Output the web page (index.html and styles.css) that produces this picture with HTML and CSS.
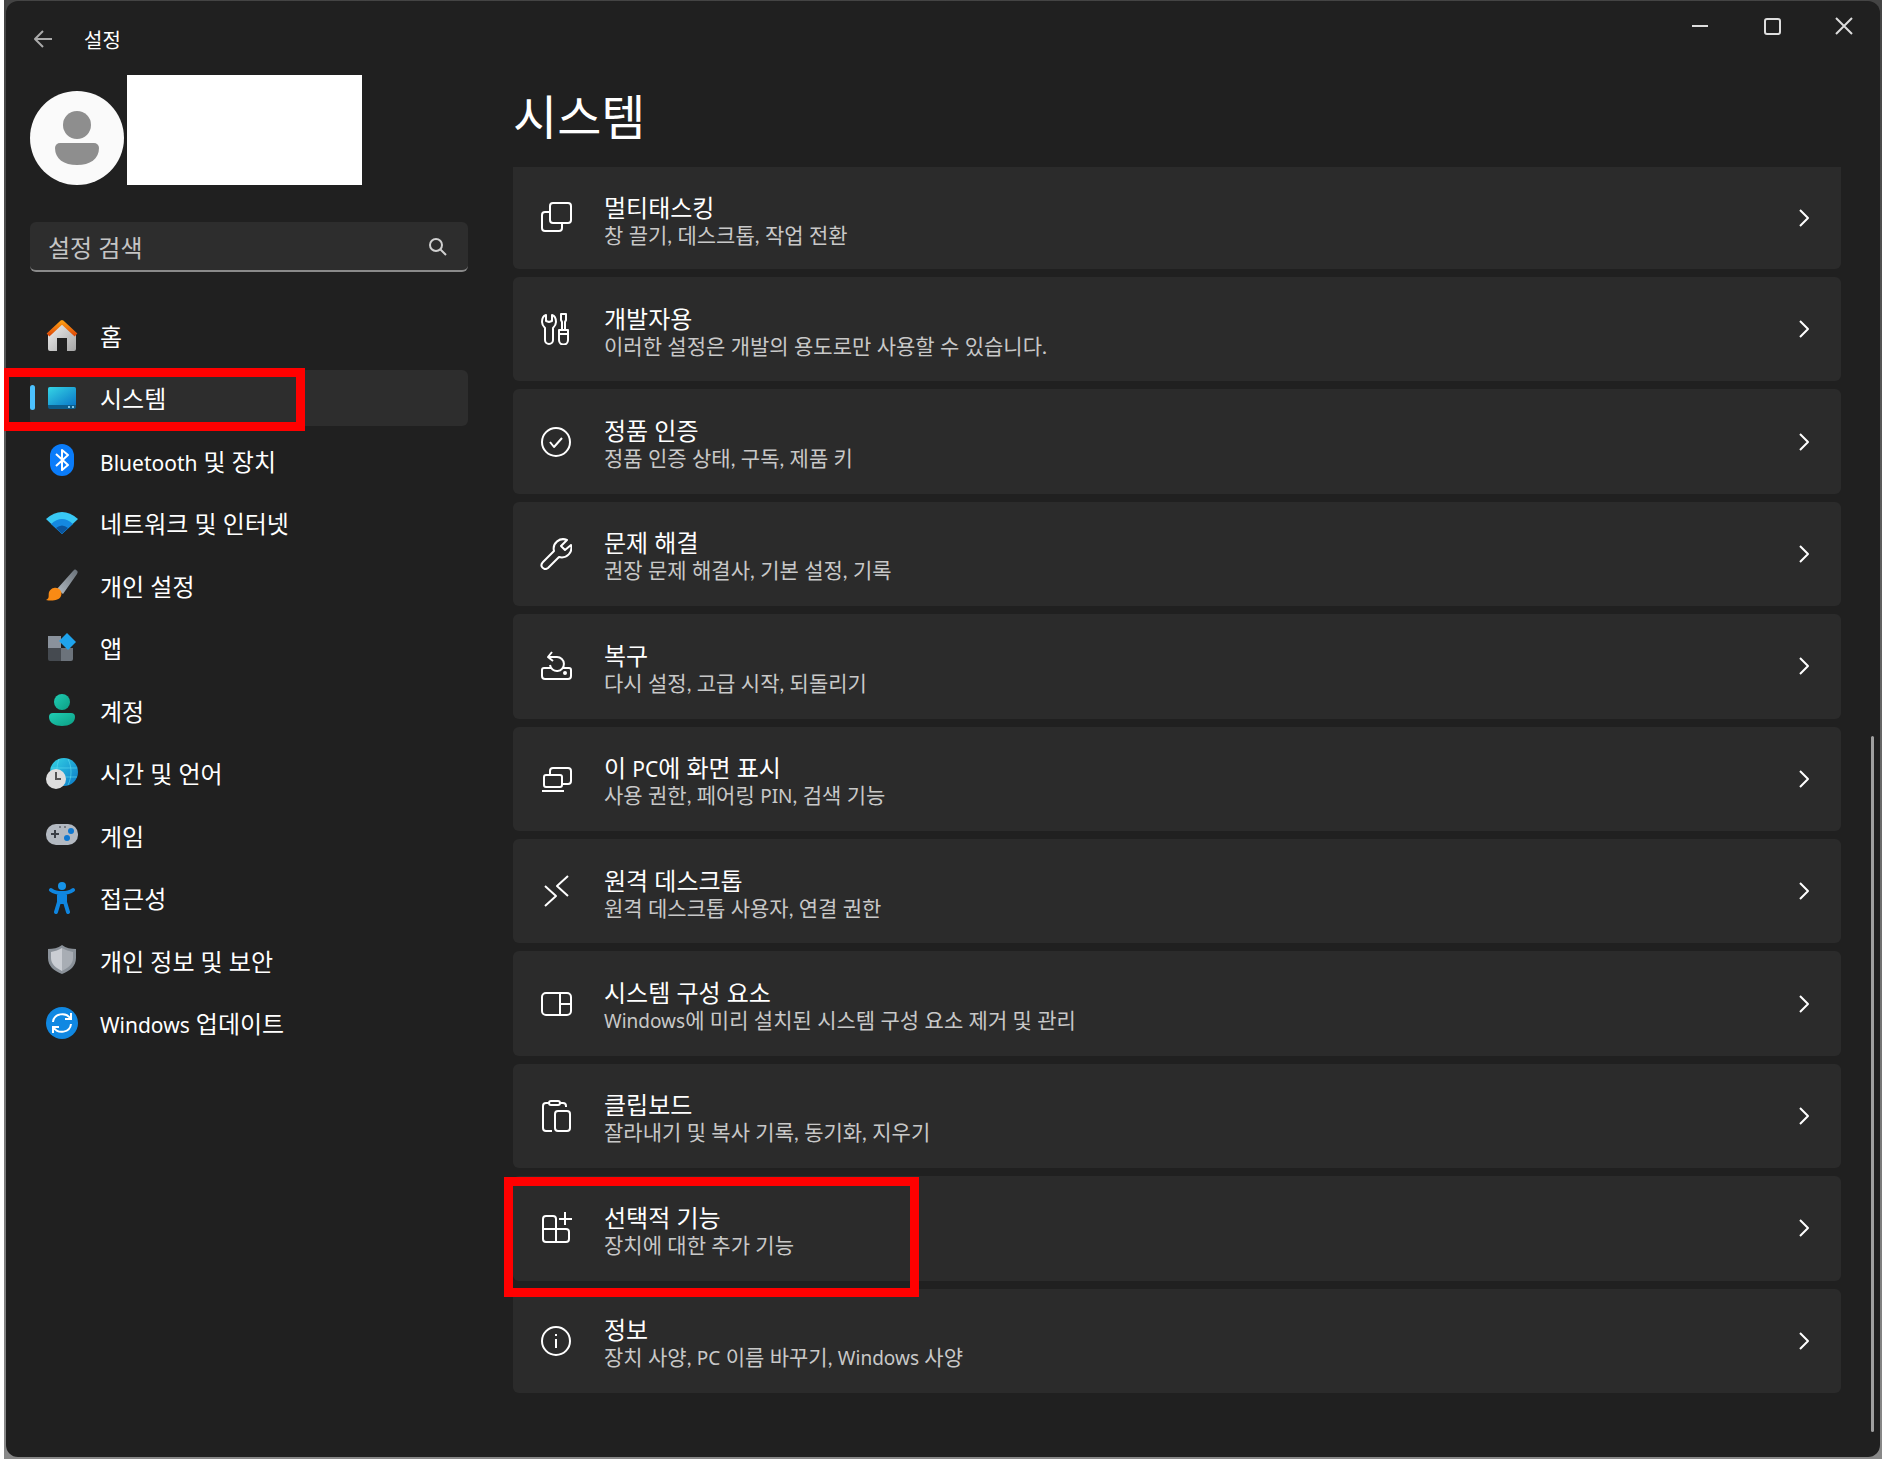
FILE: index.html
```html
<!DOCTYPE html>
<html lang="ko">
<head>
  <meta charset="UTF-8" />
  <meta name="viewport" content="width=device-width, initial-scale=1" />
  <title>설정</title>
  <link rel="stylesheet" href="styles.css">
</head>
<body>
  <div class="window">
    <header class="titlebar">
      <button class="back" aria-label="뒤로">
        <svg width="20" height="20" viewBox="0 0 20 20"><path d="M19 10H2M10 2l-8 8 8 8" /></svg>
      </button>
      <span class="app-name">설정</span>
      <div class="window-controls">
        <button aria-label="최소화"><svg width="18" height="18" viewBox="0 0 18 18"><path d="M1 9h16" /></svg></button>
        <button aria-label="최대화"><svg width="18" height="18" viewBox="0 0 18 18"><rect x="2" y="2" width="15" height="15" rx="2" /></svg></button>
        <button aria-label="닫기"><svg width="18" height="18" viewBox="0 0 18 18"><path d="M1 1l16 16M17 1 1 17" /></svg></button>
      </div>
    </header>

    <div class="content">
      <aside class="sidebar">
        <div class="account">
          <svg class="avatar" viewBox="0 0 94 94">
            <circle cx="47" cy="47" r="47" fill="#fafafa" />
            <circle cx="47" cy="34" r="14" fill="#8e8e8e" />
            <path d="M30 52h34a5 5 0 0 1 5 5c0 11-9 17-22 17s-22-6-22-17a5 5 0 0 1 5-5z" fill="#8e8e8e" />
          </svg>
          <div class="account-info"></div>
        </div>

        <form class="search">
          <input type="text" placeholder="설정 검색" aria-label="설정 검색">
          <button type="button" aria-label="검색">
            <svg width="20" height="20" viewBox="0 0 20 20"><circle cx="8" cy="8" r="6" /><path d="M12 12l6 6" /></svg>
          </button>
        </form>

        <nav class="nav">
          <a href="#home">
            <svg viewBox="0 0 32 32">
              <defs>
                <linearGradient id="roof" x1="0" y1="0" x2="0" y2="1"><stop offset="0" stop-color="#fb9a12" /><stop offset="1" stop-color="#de4a08" /></linearGradient>
                <linearGradient id="wall" x1="0" y1="0" x2="1" y2="1"><stop offset="0" stop-color="#f2f2f2" /><stop offset="1" stop-color="#a5a5a5" /></linearGradient>
              </defs>
              <path d="M16 4 2 16v14a2 2 0 0 0 2 2h7V19h10v13h7a2 2 0 0 0 2-2V16z" fill="url(#wall)" />
              <path d="M2 16 16 3l14 13" fill="none" stroke="url(#roof)" stroke-width="4" stroke-linejoin="round" />
            </svg>
            홈
          </a>
          <a href="#system" class="selected">
            <svg viewBox="0 0 32 32">
              <defs><linearGradient id="screen" x1="0" y1="0" x2="1" y2="1"><stop offset="0" stop-color="#35d5e5" /><stop offset="1" stop-color="#0a78c8" /></linearGradient></defs>
              <rect x="2" y="5" width="28" height="22" rx="2" fill="#0c5d8c" />
              <path d="M4 5h24a2 2 0 0 1 2 2v16H2V7a2 2 0 0 1 2-2z" fill="url(#screen)" />
              <path d="M22 25h2M26 25h2" stroke="#7fc4e6" stroke-width="2" />
            </svg>
            시스템
          </a>
          <a href="#bluetooth">
            <svg viewBox="0 0 32 32">
              <rect x="4" y="0" width="24" height="32" rx="12" fill="#0a7cfa" />
              <path d="M10 10l12 11-6 5V6l6 5-12 11" fill="none" stroke="#fff" stroke-width="2" stroke-linejoin="round" />
            </svg>
            <span><span class="latin">Bluetooth</span> 및 장치</span>
          </a>
          <a href="#network">
            <svg viewBox="0 0 32 32">
              <path d="M0 12Q16-2 32 12L16 27z" fill="#39c9f5" />
              <path d="M5 17q11-10 22 0L16 27z" fill="#1488e0" />
              <path d="M10 21q6-5 12 0l-6 6z" fill="#0a559e" />
            </svg>
            네트워크 및 인터넷
          </a>
          <a href="#personalization">
            <svg viewBox="0 0 32 32">
              <defs><linearGradient id="handle" x1="1" y1="0" x2="0" y2="1"><stop offset="0" stop-color="#687078" /><stop offset="1" stop-color="#b2bac2" /></linearGradient></defs>
              <path d="M30 1c2 1 2 2 1 4L17 25l-6-5L27 2c1-1 2-2 3-1z" fill="url(#handle)" />
              <path d="M8 19c5-1 9 4 7 8-2 5-10 5-15 4 4-2 2-4 3-8 1-2 3-4 5-4z" fill="#f98a14" />
            </svg>
            개인 설정
          </a>
          <a href="#apps">
            <svg viewBox="0 0 32 32">
              <path d="M2 4h13v12H2z" fill="#8a929c" />
              <path d="M2 16h13v13H4a2 2 0 0 1-2-2z" fill="#454a50" />
              <path d="M15 16h12v11a2 2 0 0 1-2 2H15z" fill="#6c737b" />
              <path d="M21 1l9 9-8 8-9-9z" fill="#1ea3ec" />
            </svg>
            앱
          </a>
          <a href="#accounts">
            <svg viewBox="0 0 32 32">
              <defs><linearGradient id="person" x1="0" y1="0" x2="1" y2="1"><stop offset="0" stop-color="#20cdb4" /><stop offset="1" stop-color="#0c9e83" /></linearGradient></defs>
              <circle cx="16" cy="8" r="8" fill="url(#person)" />
              <path d="M7 19h18a4 4 0 0 1 4 4c0 6-6 9-13 9S3 29 3 23a4 4 0 0 1 4-4z" fill="url(#person)" />
            </svg>
            계정
          </a>
          <a href="#time">
            <svg viewBox="0 0 32 32">
              <circle cx="18" cy="15" r="14" fill="url(#screen)" />
              <path d="M5 11h26M5 20h26M13 2c-3 8-3 18 2 26M22 2c4 8 4 18 0 26" fill="none" stroke="#5fdcf0" stroke-opacity=".6" />
              <circle cx="10" cy="22" r="10" fill="#dedede" />
              <path d="M10 15v7h5" fill="none" stroke="#555" stroke-width="2" />
            </svg>
            시간 및 언어
          </a>
          <a href="#gaming">
            <svg viewBox="0 0 32 32">
              <rect x="0" y="5" width="32" height="21" rx="10" fill="#b3b9c1" />
              <path d="M5 15h8M9 11v8" stroke="#3a3f46" stroke-width="2" />
              <path d="M13 8h2M18 8h2" stroke="#3a3f46" stroke-width="1" />
              <circle cx="25" cy="12" r="3" fill="#0f78d0" />
              <circle cx="21" cy="19" r="3" fill="#0f78d0" />
            </svg>
            게임
          </a>
          <a href="#accessibility">
            <svg viewBox="0 0 32 32">
              <circle cx="16" cy="4" r="4" fill="#1693e8" />
              <path d="M5 8c4 3 7 3 11 3s7 0 11-3M16 12v8M13 12v8l-3 10M19 12v8l3 10" fill="none" stroke="#0f86e0" stroke-width="4" stroke-linecap="round" stroke-linejoin="round" />
            </svg>
            접근성
          </a>
          <a href="#privacy">
            <svg viewBox="0 0 32 32">
              <path d="M16 1c4 3 9 4 14 4v9c0 8-6 13-14 16C8 27 2 22 2 14V5c5 0 10-1 14-4z" fill="#8a9199" />
              <path d="M16 4c3 2 7 3 11 4v6c0 6-5 10-11 13z" fill="#a8adb4" />
              <path d="M16 4C13 6 9 7 5 8v6c0 6 5 10 11 13z" fill="#cacdd3" />
            </svg>
            개인 정보 및 보안
          </a>
          <a href="#update">
            <svg viewBox="0 0 32 32">
              <circle cx="16" cy="16" r="16" fill="#1088e2" />
              <path d="M7 15c1-9 13-10 17-4M25 17c-1 9-13 10-17 4M25 6v6h-6M7 26v-6h6" fill="none" stroke="#fff" stroke-width="2" />
            </svg>
            <span><span class="latin">Windows</span> 업데이트</span>
          </a>
        </nav>
      </aside>

      <main class="main">
        <h1>시스템</h1>
        <div class="cards">
          <a class="card" href="#multitasking">
            <svg class="icon" viewBox="0 0 32 32"><rect x="10" y="1" width="21" height="20" rx="3" /><path d="M9 10H5a3 3 0 0 0-3 3v13a3 3 0 0 0 3 3h14a3 3 0 0 0 3-3v-4" /></svg>
            <div class="card-text"><h2>멀티태스킹</h2><p>창 끌기, 데스크톱, 작업 전환</p></div>
            <svg class="chevron" viewBox="0 0 20 20"><path d="M6 2l8 8-8 8" /></svg>
          </a>
          <a class="card" href="#developers">
            <svg class="icon" viewBox="0 0 32 32"><path d="M6 2c-3 1-4 4-4 7 0 2 1 4 3 6v12a4 4 0 0 0 8 0V15c2-2 3-4 3-6 0-3-1-6-4-7v6l-3 1-3-1z" /><path d="M21 1h5v6l-1 2v8h-3V9l-1-2zM19 17h9v10a4 4 0 0 1-9 0zM19 21h9" /></svg>
            <div class="card-text"><h2>개발자용</h2><p>이러한 설정은 개발의 용도로만 사용할 수 있습니다.</p></div>
            <svg class="chevron" viewBox="0 0 20 20"><path d="M6 2l8 8-8 8" /></svg>
          </a>
          <a class="card" href="#activation">
            <svg class="icon" viewBox="0 0 32 32"><circle cx="16" cy="16" r="14" /><path d="M10 16l4 5 8-9" /></svg>
            <div class="card-text"><h2>정품 인증</h2><p>정품 인증 상태, 구독, 제품 키</p></div>
            <svg class="chevron" viewBox="0 0 20 20"><path d="M6 2l8 8-8 8" /></svg>
          </a>
          <a class="card" href="#troubleshoot">
            <svg class="icon" viewBox="0 0 32 32"><path d="M27 2c-7-3-15 3-13 11L3 24c-4 4 1 9 5 6l11-11c8 2 14-5 12-12l-6 5-4-4z" /></svg>
            <div class="card-text"><h2>문제 해결</h2><p>권장 문제 해결사, 기본 설정, 기록</p></div>
            <svg class="chevron" viewBox="0 0 20 20"><path d="M6 2l8 8-8 8" /></svg>
          </a>
          <a class="card" href="#recovery">
            <svg class="icon" viewBox="0 0 32 32"><path d="M11 18H4a2 2 0 0 0-2 2v6a3 3 0 0 0 3 3h23a3 3 0 0 0 3-3v-6a2 2 0 0 0-2-2h-6M8 7h9a7 7 0 1 1-7 8M12 2 8 7l5 4" /><circle cx="25" cy="23" r="1" /></svg>
            <div class="card-text"><h2>복구</h2><p>다시 설정, 고급 시작, 되돌리기</p></div>
            <svg class="chevron" viewBox="0 0 20 20"><path d="M6 2l8 8-8 8" /></svg>
          </a>
          <a class="card" href="#projecting">
            <svg class="icon" viewBox="0 0 32 32"><path d="M10 11V8a3 3 0 0 1 3-3h15a3 3 0 0 1 3 3v10a3 3 0 0 1-3 3h-5M2 28h22" /><rect x="4" y="12" width="18" height="12" rx="2" /></svg>
            <div class="card-text"><h2>이 <span class="latin">PC</span>에 화면 표시</h2><p>사용 권한, 페어링 <span class="latin">PIN</span>, 검색 기능</p></div>
            <svg class="chevron" viewBox="0 0 20 20"><path d="M6 2l8 8-8 8" /></svg>
          </a>
          <a class="card" href="#remote">
            <svg class="icon" viewBox="0 0 32 32"><path d="M5 11l11 10L5 31M28 1 17 11l11 10" /></svg>
            <div class="card-text"><h2>원격 데스크톱</h2><p>원격 데스크톱 사용자, 연결 권한</p></div>
            <svg class="chevron" viewBox="0 0 20 20"><path d="M6 2l8 8-8 8" /></svg>
          </a>
          <a class="card" href="#components">
            <svg class="icon" viewBox="0 0 32 32"><rect x="2" y="5" width="29" height="22" rx="4" /><path d="M20 5v22M20 16h11" /></svg>
            <div class="card-text"><h2>시스템 구성 요소</h2><p><span class="latin">Windows</span>에 미리 설치된 시스템 구성 요소 제거 및 관리</p></div>
            <svg class="chevron" viewBox="0 0 20 20"><path d="M6 2l8 8-8 8" /></svg>
          </a>
          <a class="card" href="#clipboard">
            <svg class="icon" viewBox="0 0 32 32"><path d="M9 3H6a3 3 0 0 0-3 3v22a3 3 0 0 0 3 3h6M20 3h3a3 3 0 0 1 3 3v1" /><rect x="9" y="1" width="11" height="4" rx="2" /><rect x="15" y="11" width="15" height="20" rx="3" /></svg>
            <div class="card-text"><h2>클립보드</h2><p>잘라내기 및 복사 기록, 동기화, 지우기</p></div>
            <svg class="chevron" viewBox="0 0 20 20"><path d="M6 2l8 8-8 8" /></svg>
          </a>
          <a class="card highlighted" href="#optional">
            <svg class="icon" viewBox="0 0 32 32"><path d="M16 17V7a3 3 0 0 0-3-3H6a3 3 0 0 0-3 3v20a3 3 0 0 0 3 3h20a3 3 0 0 0 3-3v-7a3 3 0 0 0-3-3H3M16 17v13M25 0v13M19 7h13" /></svg>
            <div class="card-text"><h2>선택적 기능</h2><p>장치에 대한 추가 기능</p></div>
            <svg class="chevron" viewBox="0 0 20 20"><path d="M6 2l8 8-8 8" /></svg>
          </a>
          <a class="card" href="#about">
            <svg class="icon" viewBox="0 0 32 32"><circle cx="16" cy="16" r="14" /><path d="M16 14v9M16 9v2" /></svg>
            <div class="card-text"><h2>정보</h2><p>장치 사양, <span class="latin">PC</span> 이름 바꾸기, <span class="latin">Windows</span> 사양</p></div>
            <svg class="chevron" viewBox="0 0 20 20"><path d="M6 2l8 8-8 8" /></svg>
          </a>
        </div>
      </main>

      <div class="scrollbar"><div class="thumb"></div></div>
    </div>
  </div>
</body>
</html>
```
FILE: styles.css
```css
*,
*::before,
*::after {
  box-sizing: border-box;
}

body {
  margin: 0;
  padding: 1px 2px 2px;
  border-left: 4px solid #fff;
  background: linear-gradient(#444, #888);
  font-family: Lato, "Noto Sans CJK KR", sans-serif;
  font-size: 24px;
  color: #fff;
}

h1, h2, p {
  margin: 0;
  font-weight: 400;
}

a {
  color: inherit;
  text-decoration: none;
}

button {
  padding: 0;
  border: none;
  background: none;
}

svg {
  flex-shrink: 0;
}

.latin {
  font-family: "Noto Sans", sans-serif;
  line-height: 1;
}

.window {
  display: flex;
  flex-direction: column;
  min-height: calc(100vh - 3px);
  background: #202020;
  border-radius: 12px;
}

/* title bar */
.titlebar {
  display: flex;
  align-items: flex-start;
  height: 74px;
  padding-left: 27px;
}

.titlebar svg {
  fill: none;
  stroke: #ddd;
  stroke-width: 2;
  stroke-linejoin: round;
}

.back {
  height: 76px;
}

.titlebar .back svg {
  display: block;
  stroke: #aaa;
}

.app-name {
  margin-left: 31px;
  font-size: 20px;
  line-height: 78px;
}

.window-controls {
  display: flex;
  margin-left: auto;
}

.window-controls button {
  width: 72px;
  height: 50px;
}

.window-controls svg {
  display: block;
  margin: 0 auto;
}

.content {
  display: flex;
  flex: 1;
  padding: 0 6px 0 24px;
}

/* sidebar */
.sidebar {
  width: 438px;
  flex-shrink: 0;
}

.account {
  display: flex;
  align-items: flex-end;
  gap: 3px;
}

.avatar {
  width: 94px;
  height: 94px;
}

.account-info {
  width: 235px;
  height: 110px;
  background: #fff;
}

.search {
  display: flex;
  align-items: center;
  height: 50px;
  margin-top: 37px;
  padding: 2px 20px 0 18px;
  background: #2d2d2d;
  border-bottom: 2px solid #8a8a8a;
  border-radius: 6px;
}

.search input {
  flex: 1;
  min-width: 0;
  padding: 0;
  border: none;
  outline: none;
  background: none;
  color: #fff;
  font: inherit;
}

.search input::placeholder {
  color: #c5c5c5;
  opacity: 1;
}

.search svg {
  display: block;
  fill: none;
  stroke: #d0d0d0;
  stroke-width: 2;
}

.nav {
  display: flex;
  flex-direction: column;
  justify-content: space-between;
  height: 744px;
  margin-top: 35px;
}

.nav a {
  position: relative;
  display: flex;
  align-items: center;
  gap: 22px;
  height: 56px;
  padding-left: 16px;
  border-radius: 6px;
}

.nav svg {
  width: 32px;
  height: 32px;
}

.nav .latin {
  font-size: 21px;
}

.nav .selected {
  background: #2d2d2d;
}

.nav .selected::before {
  content: "";
  position: absolute;
  left: 0;
  width: 5px;
  height: 25px;
  border-radius: 3px;
  background: #4cc2ff;
}

/* red marker boxes */
.nav .selected::after,
.highlighted::after {
  content: "";
  position: absolute;
  border: 9px solid #f00;
}

.nav .selected::after {
  top: -2px;
  left: -30px;
  width: 305px;
  height: 63px;
}

.highlighted::after {
  top: 1px;
  left: -9px;
  width: 415px;
  height: 120px;
}

/* main column */
.main {
  display: flex;
  flex-direction: column;
  flex: 1;
  min-width: 0;
  margin-left: 45px;
  padding-bottom: 64px;
}

h1 {
  margin-bottom: 8px;
  font-size: 48px;
  line-height: 84px;
}

.cards {
  display: grid;
  flex: 1;
  grid-template-rows: 102px;
  grid-auto-rows: 1fr;
  gap: 8px;
}

.card {
  position: relative;
  display: flex;
  align-items: center;
  gap: 32px;
  padding: 0 27px;
  background: #2b2b2b;
  border-radius: 6px;
}

/* top edge is scrolled under the heading */
.card:first-child {
  border-top-left-radius: 0;
  border-top-right-radius: 0;
}

.highlighted {
  z-index: 1;
}

.card svg {
  fill: none;
  stroke: #fff;
  stroke-width: 2;
  stroke-linejoin: round;
}

.icon {
  width: 32px;
  height: 32px;
}

.chevron {
  width: 20px;
  height: 20px;
}

.card-text {
  flex: 1;
  padding-top: 4px;
}

.card h2 {
  font-size: 24px;
  line-height: 28px;
}

.card h2 .latin {
  font-size: 21px;
}

.card p {
  font-size: 21px;
  line-height: 25px;
  color: #c8c8c8;
}

.card p .latin {
  font-size: 19px;
}

.scrollbar {
  display: grid;
  grid-template-rows: 661fr 696fr;
  width: 3px;
  margin-left: 30px;
  padding-bottom: 25px;
}

.thumb {
  grid-row: 2;
  background: #9f9f9f;
  border-radius: 2px;
}
```
